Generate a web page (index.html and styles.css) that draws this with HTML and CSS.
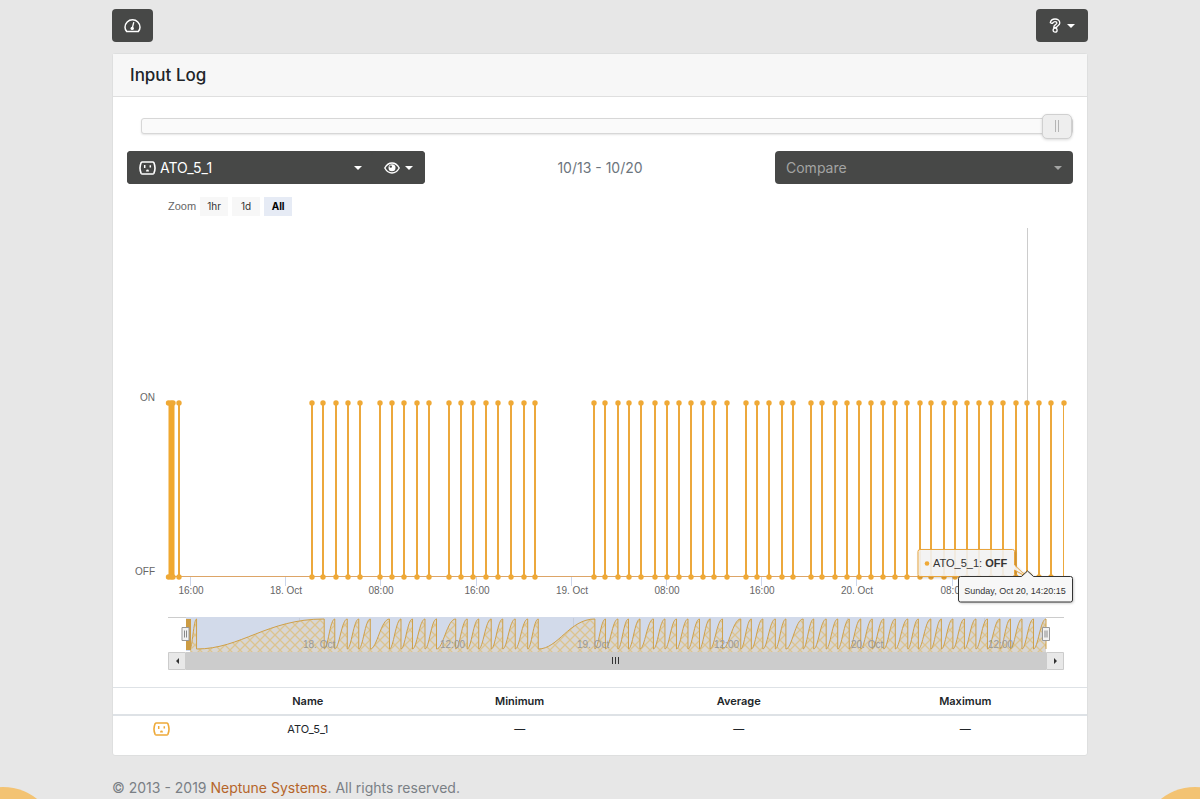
FILE: index.html
```html
<!DOCTYPE html>
<html lang="en">
<head>
<meta charset="utf-8">
<meta name="viewport" content="width=device-width, initial-scale=1">
<title>Input Log</title>
<link rel="stylesheet" href="styles.css">
</head>
<body>
<svg class="defs" aria-hidden="true">
  <symbol id="outlet" viewBox="0 0 17 14">
    <path d="M3.4 1h10.2c.6 0 1 .2 1.3.7 1.4 3.300 1.400 7.300 0 10.600-.3.500-.7.700-1.300.700H3.400c-.6 0-1-.2-1.300-.7C.7 9 .7 5 2.100 1.700 2.400 1.200 2.800 1 3.400 1z" fill="none" stroke="currentColor" stroke-width="1.600"/>
    <path d="M5.700 4v3M11.300 4.200v2.400" stroke="currentColor" stroke-width="1.500"/>
    <path d="M7.100 10.600V9.900a1.400 1.400 0 0 1 2.800 0v.7z" fill="currentColor"/>
  </symbol>
</svg>
<div class="page">
  <nav class="topbar">
    <button class="btn btn-icon" type="button" aria-label="Dashboard">
      <svg width="17" height="14" viewBox="0 0 17 14"><path d="M2.800 12.600C1.400 11.200 1 9.900 1 8.300a7.500 7.500 0 0 1 15 0c0 1.600-.4 2.900-1.800 4.300z" fill="none" stroke="currentColor" stroke-width="1.500" stroke-linejoin="round"/><path d="M9.800 3.200 8.300 9" stroke="currentColor" stroke-width="1.300"/><circle cx="8.200" cy="9.400" r="1.700" fill="currentColor"/></svg>
    </button>
    <button class="btn btn-help" type="button" aria-label="Help">
      <svg width="12" height="16" viewBox="0 0 12 16"><path d="M1.300 4.600C1.800 2.400 3.600 1 6 1c2.700 0 4.800 1.600 4.800 4 0 2.600-3.200 2.700-3.200 4.400H4.700C4.600 6.700 7.900 6.700 7.900 5c0-.8-.8-1.400-1.900-1.400-1.200 0-1.700.6-2.300 1.400-.3.400-.7.500-1.100.3z" fill="none" stroke="currentColor" stroke-width="1.300" stroke-linejoin="round"/><circle cx="6.100" cy="12.200" r="2" fill="none" stroke="currentColor" stroke-width="1.300"/></svg>
      <span class="caret"></span>
    </button>
  </nav>

  <main class="card">
    <header class="card-header"><h1>Input Log</h1></header>
    <div class="card-body">
      <input class="range" type="range" min="0" max="100" value="100" aria-label="Date range">
      <div class="toolbar">
        <div class="group">
          <label class="picker">
            <svg width="17" height="14"><use href="#outlet"/></svg>
            <select aria-label="Input"><option>ATO_5_1</option></select>
            <span class="caret"></span>
          </label>
          <button class="btn btn-eye" type="button" aria-label="Visibility">
            <svg width="16" height="12" viewBox="0 0 16 12"><path d="M.8 6C2.600 2.700 5.100 1 8 1S13.400 2.700 15.200 6C13.400 9.300 10.900 11 8 11S2.600 9.300.8 6z" fill="none" stroke="currentColor" stroke-width="1.400"/><circle cx="8" cy="5.700" r="3.500" fill="currentColor"/><circle cx="6.800" cy="4.600" r="1.200" fill="#474847"/></svg>
            <span class="caret"></span>
          </button>
        </div>
        <div class="dates">10/13 - 10/20</div>
        <label class="picker picker-muted">
          <select aria-label="Compare"><option>Compare</option></select>
          <span class="caret"></span>
        </label>
      </div>
      <div class="zoom">
        <span>Zoom</span>
        <button type="button">1hr</button>
        <button type="button">1d</button>
        <button type="button" class="active">All</button>
      </div>
    </div>

    <svg class="chart" viewBox="113 220 974 460" role="img" aria-label="ATO_5_1 on and off over time">
      <defs>
        <pattern id="hatch" width="10" height="10" patternUnits="userSpaceOnUse"><path d="M-1 -1l12 12M11 -1l-12 12" stroke="#dcc48f" stroke-width="1.300"/></pattern>
      </defs>
      <g class="axis">
        <text x="155" y="401" text-anchor="end">ON</text>
        <text x="155" y="575" text-anchor="end">OFF</text>
        <g id="ticks"></g>
      </g>
      <path class="crosshair" d="M1027.500 228V577"/>
      <g id="series"></g>

      <g class="tip">
        <circle cx="1027" cy="577" r="6" class="halo"/>
        <path class="tip-series" d="M920 549.500H1012.500q2 0 2 2V565L1027 577 1014.500 570V574.500q0 2-2 2H920q-2 0-2-2V551.500q0-2 2-2z"/>
        <circle cx="927" cy="563.500" r="2.300" class="dot"/>
        <text class="tip-text" x="933" y="567">ATO_5_1: <tspan class="strong">OFF</tspan></text>
        <path class="tip-date" d="M960.500 576.500H1021.500L1027.500 571 1033.500 576.500H1070.500q2 0 2 2V600q0 2-2 2H960.500q-2 0-2-2V578.500q0-2 2-2z"/>
        <text class="tip-small" x="1015" y="594" text-anchor="middle">Sunday, Oct 20, 14:20:15</text>
      </g>

      <g id="navigator">
        <path d="M168 617.500H1064" stroke="#ccc"/>
        <rect x="186" y="617" width="860" height="34" fill="#d2daea"/>
        <g id="navgrid"></g>
        <path id="navarea" fill="#d8d6d4"/>
        <path id="navhatch" fill="url(#hatch)"/>
        <path id="navline" fill="none" stroke="#cfa049"/>
        <g id="navlabels" class="navlabels"></g>
        <rect x="186" y="619" width="5" height="31" fill="#cc9c44"/>
        <rect x="186" y="652" width="860" height="18" fill="#ccc"/>
        <path class="scroll-btn" d="M168.500 652.500h17v17h-17zM1046.500 652.500h17v17h-17z"/>
        <path d="M179 658v6l-3-3zM1054 658v6l3-3z" fill="#333"/>
        <path d="M612.500 657v7M615.500 657v7M618.500 657v7" stroke="#333"/>
        <path class="handle" d="M182 627.500h7v13h-7zM1042.500 627.500h7v13h-7z"/>
        <path d="M184.500 630.500v7M186.500 630.500v7M1045 630.500v7M1047 630.500v7" stroke="#888"/>
      </g>
    </svg>

    <table class="stats">
      <colgroup><col class="c-icon"><col class="c-name"><col class="c-min"><col class="c-avg"><col></colgroup>
      <thead><tr><td></td><th scope="col">Name</th><th scope="col">Minimum</th><th scope="col">Average</th><th scope="col">Maximum</th></tr></thead>
      <tbody><tr><td class="amber"><svg width="17" height="14"><use href="#outlet"/></svg></td><td>ATO_5_1</td><td>—</td><td>—</td><td>—</td></tr></tbody>
    </table>
  </main>

  <footer class="footer">© 2013 - 2019 <a href="#">Neptune Systems</a>. All rights reserved.</footer>
</div>
<div class="bubble bubble-left"></div>
<div class="bubble bubble-right"></div>
<script src="chart.js"></script>
</body>
</html>
```
FILE: styles.css
```css
* { box-sizing: border-box; }
body {
  margin: 0;
  min-height: 100vh;
  background: #e7e7e7;
  color: #212529;
  font-family: Inter, "Liberation Sans", sans-serif;
  font-size: 14px;
  line-height: 20px;
}
button, select { font: inherit; color: inherit; }
svg { display: block; flex: none; }
.defs { position: absolute; width: 0; height: 0; }

.page { max-width: 976px; margin: 0 auto; padding-top: 9px; }
.topbar { display: flex; justify-content: space-between; margin-bottom: 11px; }
.btn {
  display: flex;
  align-items: center;
  justify-content: center;
  height: 33px;
  border: 0;
  border-radius: 4px;
  background: #474847;
  color: #fff;
}
.btn-icon { width: 41px; padding: 0; }
.btn-help { gap: 6px; width: 52px; padding: 0; }
.btn-eye { gap: 5px; padding: 0 12px; }
.caret {
  border: 4px solid transparent;
  border-top-color: currentColor;
  border-bottom: 0;
}

.card {
  background: #fff;
  border: 1px solid #dedfdf;
  border-radius: 3px;
}
.card-header {
  padding: 11px 17px;
  background: #f7f7f7;
  border-bottom: 1px solid #dfdfdf;
}
h1 { margin: 0; font-size: 17px; font-weight: 500; line-height: 20px; }
.card-body { padding: 16px 14px 0; }

.range {
  display: block;
  width: calc(100% - 14px);
  height: 25px;
  margin: 0 0 13px 14px;
  appearance: none;
  background: none;
}
.range::-webkit-slider-runnable-track {
  height: 16px;
  border: 1px solid #d7d7d7;
  border-radius: 3px;
  background: #fafafa;
  box-shadow: 0 1px 2px #0000001a;
}
.range::-webkit-slider-thumb {
  appearance: none;
  width: 30px;
  height: 25px;
  margin: -5px -1px 0 0;
  border: 1px solid #d0d0d0;
  border-radius: 5px;
  background:
    linear-gradient(90deg, #b5b5b5 1px, transparent 1px 3px, #b5b5b5 3px) center / 4px 12px no-repeat,
    #eee;
  box-shadow: 0 1px 3px #00000026;
}

.toolbar { display: grid; grid-template-columns: repeat(3, 1fr); gap: 26px; align-items: center; }
.group { display: flex; border-radius: 4px; background: #474847; }
.picker {
  display: flex;
  flex: 1;
  align-items: center;
  gap: 4px;
  height: 33px;
  padding: 0 12px;
  border-radius: 4px;
  background: #474847;
  color: #fff;
}
.group .picker { padding-right: 10px; }
.picker select {
  flex: 1;
  min-width: 0;
  padding: 0;
  border: 0;
  appearance: none;
  background: none;
}
.picker-muted { padding: 0 11px; color: #a3a4a3; }
.dates { text-align: center; color: #6c757d; }

.zoom {
  display: flex;
  align-items: center;
  gap: 4px;
  margin: 13px 0 4px 41px;
  font-size: 10px;
  line-height: 19px;
  color: #666;
}
.zoom span { font-family: "Liberation Sans", sans-serif; font-size: 11px; }
.zoom button { width: 28px; height: 19px; padding: 0; border: 0; background: #f7f7f7; color: #333; }
.zoom .active { background: #e6ebf5; color: #000; font-weight: 700; }

.chart { width: 100%; height: auto; margin-bottom: 7px; font-family: "Liberation Sans", sans-serif; }
.axis text { font-size: 10px; fill: #666; }
.tick { stroke: #ccd6eb; }
.crosshair { stroke: #ccc; }
.pulse { stroke: #eca83c; stroke-width: 2; }
.burst { stroke: #f0a830; stroke-width: 6; }
.thin { stroke: #eca83c; stroke-width: 1; }
.base { stroke: #dda567; }
.dot { fill: #efa936; }
.halo { fill: #efa936; fill-opacity: .3; }
.tip-series { fill: #f7f7f7; fill-opacity: .88; stroke: #e9a53d; filter: drop-shadow(1px 1px 1px #0003); }
.tip-date { fill: #f7f7f7; stroke: #333; filter: drop-shadow(1px 1px 1px #0003); }
.tip-text { font-size: 11px; fill: #333; }
.tip-small { font-size: 9px; fill: #333; }
.strong { font-weight: 700; }
.navlabels { font-size: 10px; fill: #999; }
.navgrid { stroke: #c6cbd8; }
.scroll-btn { fill: #e8e8e8; stroke: #ccc; }
.handle { fill: #f2f2f2; stroke: #999; }

.stats {
  width: 100%;
  table-layout: fixed;
  border-collapse: collapse;
  border-top: 1px solid #dee2e6;
  margin-bottom: 13px;
  font-size: 11px;
  line-height: 14px;
  text-align: center;
}
.stats th { padding: 6px; font-weight: 600; }
.stats td { padding: 6px; }
.stats thead { border-bottom: 2px solid #dee2e6; }
.stats svg { margin: 0 auto; }
.c-icon { width: 10%; }
.c-name { width: 20%; }
.c-min { width: 23.5%; }
.c-avg { width: 21.5%; }
.amber { color: #eea938; }

.footer { padding-top: 22px; color: #7a7f85; }
.footer a { color: #b5652a; text-decoration: none; }
.bubble {
  position: fixed;
  bottom: -96px;
  width: 108px;
  height: 108px;
  border-radius: 50%;
  background: #f3c373;
}
.bubble-left { left: -51px; }
.bubble-right { right: -49px; }
```
FILE: chart.js
```js
const pulses = [
  179, 312, 323, 336, 348, 360, 380, 392, 404, 417, 429, 449, 461, 473, 486, 498, 511, 524, 535,
  594, 605, 618, 629, 641, 655, 667, 679, 691, 703, 714, 727, 746, 757, 769, 782, 793,
  811, 822, 835, 847, 859, 871, 883, 895, 907, 920, 931, 944, 955, 967, 979, 991, 1003,
  1016, 1027, 1039, 1051, 1064
];
const hours = ["16:00", "18. Oct", "08:00", "16:00", "19. Oct", "08:00", "16:00", "20. Oct", "08:00"];
const overview = [[299, "18. Oct"], [436, "12:00"], [573, "19. Oct"], [710, "12:00"], [847, "20. Oct"], [984, "12:00"]];
const fill = (id, html) => { document.getElementById(id).innerHTML = html; };
const toNav = x => 186 + (x - 168) * 860 / 896;

fill("ticks", hours.map((label, i) => {
  const x = Math.round(191 + i * 95.2);
  return `<path class="tick" d="M${x - 0.5} 577v9"/><text x="${x}" y="594" text-anchor="middle">${label}</text>`;
}).join(""));

const dots = x => `<circle class="dot" cx="${x}" cy="403" r="2.700"/><circle class="dot" cx="${x}" cy="577" r="2.700"/>`;
fill("series",
  '<path class="base" d="M167 576.500H1064"/><path class="burst" d="M171.500 403V577"/>' +
  dots(168.5) + dots(171) + dots(173) +
  pulses.map(x => x === 1064
    ? `<path class="thin" d="M${x - 0.5} 403V577"/><circle class="dot" cx="${x}" cy="403" r="2.700"/>`
    : `<path class="pulse" d="M${x} 403V577"/>` + dots(x)).join(""));

let path = "M190 649";
let from = 190;
for (const pulse of pulses) {
  const to = toNav(pulse);
  const dx = to - from;
  path += `C${from + dx * 0.35} 649 ${from + dx * 0.55} 619 ${to} 619V649`;
  from = to;
}
document.getElementById("navline").setAttribute("d", path);
for (const id of ["navarea", "navhatch"]) {
  document.getElementById(id).setAttribute("d", path + "V652H190z");
}
fill("navgrid", overview.map(([x]) => `<path class="navgrid" d="M${x + 0.5} 618v33"/>`).join(""));
fill("navlabels", overview.map(([x, label]) => `<text x="${x + 4}" y="648">${label}</text>`).join(""));
```
